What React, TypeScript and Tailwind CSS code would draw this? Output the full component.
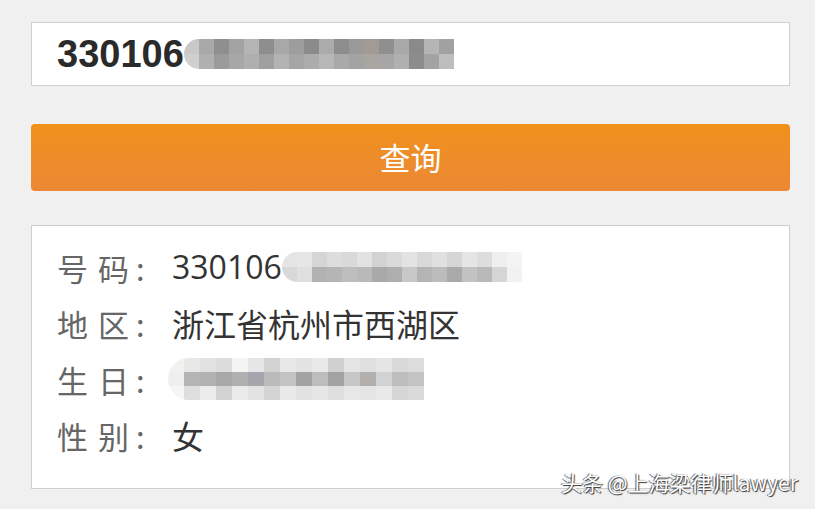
const cjk = "font-['Microsoft_YaHei','Noto_Sans_CJK_SC',sans-serif]";

function Mosaic({ rows, cell }: { rows: string[][]; cell: string }) {
  return (
    <div className="flex flex-col">
      {rows.map((r, i) => (
        <div key={i} className="flex">
          {r.map((c, j) => (
            <div key={j} className={cell} style={{ backgroundColor: c }} />
          ))}
        </div>
      ))}
    </div>
  );
}

const inputMosaic = [
  ["#c8c8c8", "#a9a9a9", "#8f8f8f", "#a3a3a3", "#b5b5b5", "#8e8e8e", "#a8a8a8", "#9d9d9d", "#8b8b8b", "#ababab", "#8d8d8d", "#9a9a9a", "#a29a94", "#8f8f8f", "#a9a9a9", "#8a8a8a", "#b5b5b5", "#a1a1a1"],
  ["#cfcfcf", "#b0b0b0", "#9b9b9b", "#a7a7a7", "#afafaf", "#9f9f9f", "#b3b3b3", "#a5a5a5", "#acacac", "#b7b7b7", "#a9a9a9", "#a3a3a3", "#a9a5a1", "#a6a6a6", "#b0b0b0", "#8c8c8c", "#a3a3a3", "#bdbdbd"],
];

const idMosaic = [
  ["#e4e4e4", "#e6e6e6", "#d5d5d5", "#dddddd", "#d9d9d9", "#e2e2e2", "#d2d2d2", "#dadada", "#e3e3e3", "#d8d8d8", "#e0e0e0", "#d6d6d6", "#e5e5e5", "#dddddd", "#efefef", "#f4f4f4"],
  ["#d8d8d8", "#e0e0e0", "#b2b2b2", "#b5b5b5", "#bdbdbd", "#b9b9b9", "#a9a9a9", "#aeaeae", "#c8c8c8", "#b4b4b4", "#bcbcbc", "#aaaaaa", "#c2c2c2", "#b9b9b9", "#d5d5d5", "#f2f2f2"],
];

const birthMosaic = [
  ["#f3f1ee", "#e8e8e8", "#e2e2e2", "#dcdcdc", "#f4f4f4", "#e6e6e6", "#d3d3d3", "#e8e8e8", "#e3e3e3", "#e9e9e9", "#d0d0d0", "#e4e4e4", "#e0e0e0", "#e5e5e5", "#d9d9d9", "#dddddd"],
  ["#efefef", "#b5b5b5", "#b2b2b2", "#a8a8a8", "#b0b0b0", "#a5a6ad", "#bababa", "#c3c3c3", "#a3a3a3", "#bdbdbd", "#a2a2a2", "#c6c6c6", "#b3afac", "#d0d2d4", "#bdbdbd", "#c3c3c3"],
  ["#f6f6f6", "#dedede", "#ececec", "#d2d2d2", "#ebebeb", "#e3e3e3", "#d4d4d4", "#e9e9e9", "#e2e2e2", "#e6e6e6", "#dfdfdf", "#e7e7e7", "#e4e4e4", "#e9e9e9", "#d6d6d6", "#dadada"],
];

function Row({ label, children }: { label: [string, string]; children: React.ReactNode }) {
  return (
    <div className="flex h-[56px] items-center">
      <div className="flex w-[115px] items-center text-[31px] text-[#666] leading-none">
        <span>{label[0]}</span>
        <span className="ml-[10px]">{label[1]}</span>
        <span className="ml-[7px]">:</span>
      </div>
      <div className="flex items-center text-[32px] text-[#333] leading-none">{children}</div>
    </div>
  );
}

export default function App() {
  return (
    <div className={`relative h-[509px] w-[815px] overflow-hidden bg-[#f0f0f0] ${cjk}`}>
      <div className="flex flex-col pl-[31px] pt-[22px]">
        <div className="flex h-[64px] w-[759px] items-center border border-[#cfcfcf] bg-white pl-[25px]">
          <span className="font-['Liberation_Sans',Arial,sans-serif] text-[38px] font-bold text-[#2a2a2a] leading-none">330106</span>
          <div className="overflow-hidden rounded-l-full">
            <Mosaic rows={inputMosaic} cell="h-[15px] w-[15px]" />
          </div>
        </div>

        <button className="mt-[38px] flex h-[67px] w-[759px] items-center justify-center rounded-[4px] bg-gradient-to-b from-[#ef9118] to-[#ec8834] text-[31px] text-white">
          查询
        </button>

        <div className="mt-[34px] flex h-[264px] w-[759px] flex-col border border-[#cfcfcf] bg-white pl-[25px] pt-[13px]">
          <Row label={["号", "码"]}>
            <span className="font-['Segoe_UI','Open_Sans',sans-serif] text-[32px]">330106</span>
            <div className="overflow-hidden rounded-l-full">
              <Mosaic rows={idMosaic} cell="h-[15px] w-[15px]" />
            </div>
          </Row>
          <Row label={["地", "区"]}>
            <span>浙江省杭州市西湖区</span>
          </Row>
          <Row label={["生", "日"]}>
            <div className="ml-[-4px] overflow-hidden rounded-l-full">
              <Mosaic rows={birthMosaic} cell="h-[14px] w-[16px]" />
            </div>
          </Row>
          <Row label={["性", "别"]}>
            <span>女</span>
          </Row>
        </div>
      </div>

      <div className="absolute left-[561px] top-[472px] text-[21px] leading-none text-white [text-shadow:1px_1px_1px_#333,-1px_0_1px_#555]">
        头条 @上海梁律师lawyer
      </div>
    </div>
  );
}
